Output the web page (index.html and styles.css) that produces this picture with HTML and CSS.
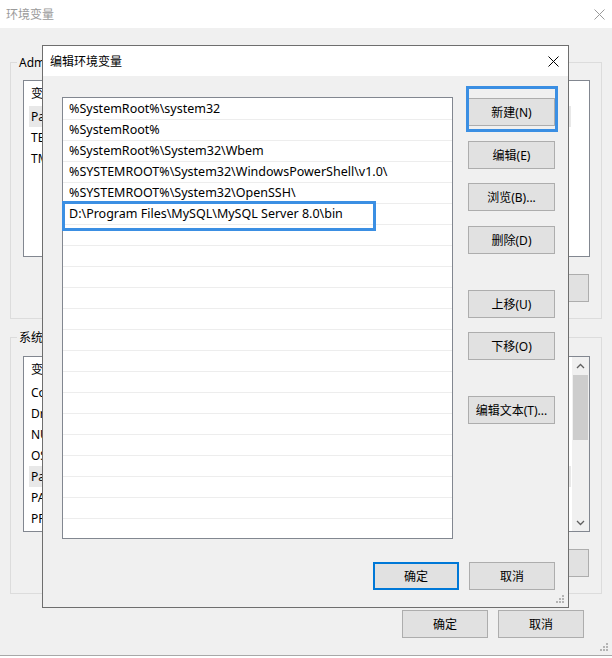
FILE: index.html
```html
<!DOCTYPE html>
<html lang="zh-CN">
<head>
<meta charset="utf-8">
<title>环境变量</title>
<link rel="stylesheet" href="styles.css">
</head>
<body>
<div class="win">
  <div class="titlebar">
    <span class="title">环境变量</span>
    <svg class="x-gray" width="11" height="11" viewBox="0 0 11 11"><path d="M0.5 0.5L10.5 10.5M10.5 0.5L0.5 10.5" stroke="#9a9a9a" stroke-width="1"/></svg>
  </div>
  <div class="body">
    <fieldset class="group g1">
      <legend>Administrator 的用户变量(U)</legend>
      <div class="list l1">
        <div class="row head"><span class="c1">变量</span></div>
        <div class="row sel"><span class="c1">Path</span></div>
        <div class="row"><span class="c1">TEMP</span></div>
        <div class="row"><span class="c1">TMP</span></div>
      </div>
      <div class="btnrow">
        <button class="btn">新建(N)...</button>
        <button class="btn">编辑(E)...</button>
        <button class="btn">删除(D)</button>
      </div>
    </fieldset>
    <fieldset class="group g2">
      <legend>系统变量(S)</legend>
      <div class="list l2">
        <div class="rows">
          <div class="row head"><span class="c1">变量</span></div>
          <div class="row"><span class="c1">ComSpec</span></div>
          <div class="row"><span class="c1">DriverData</span></div>
          <div class="row"><span class="c1">NUMBER_OF_PROCESSORS</span></div>
          <div class="row"><span class="c1">OS</span></div>
          <div class="row sel"><span class="c1">Path</span></div>
          <div class="row"><span class="c1">PATHEXT</span></div>
          <div class="row"><span class="c1">PROCESSOR_ARCHITECTURE</span></div>
        </div>
        <div class="sb">
          <div class="sb-arrow"><svg width="9" height="6" viewBox="0 0 9 6"><path d="M1 5L4.5 1.5L8 5" fill="none" stroke="#606060" stroke-width="1.3"/></svg></div>
          <div class="sb-track"><div class="sb-thumb"></div></div>
          <div class="sb-arrow"><svg width="9" height="6" viewBox="0 0 9 6"><path d="M1 1L4.5 4.5L8 1" fill="none" stroke="#606060" stroke-width="1.3"/></svg></div>
        </div>
      </div>
      <div class="btnrow">
        <button class="btn">新建(W)...</button>
        <button class="btn">编辑(I)...</button>
        <button class="btn">删除(L)</button>
      </div>
    </fieldset>
    <div class="footer">
      <button class="btn">确定</button>
      <button class="btn">取消</button>
    </div>
  </div>
  <svg class="grip grip-outer" width="8" height="8" viewBox="0 0 8 8"><g fill="#b4b4b4"><rect x="6" y="0" width="2" height="2"/><rect x="3" y="3" width="2" height="2"/><rect x="6" y="3" width="2" height="2"/><rect x="0" y="6" width="2" height="2"/><rect x="3" y="6" width="2" height="2"/><rect x="6" y="6" width="2" height="2"/></g></svg>
</div>

<div class="dlg">
  <div class="dlg-title">
    <span>编辑环境变量</span>
    <svg width="11" height="11" viewBox="0 0 11 11"><path d="M0.5 0.5L10.5 10.5M10.5 0.5L0.5 10.5" stroke="#000" stroke-width="1"/></svg>
  </div>
  <div class="dlg-main">
    <div class="plist">
      <div class="prow">%SystemRoot%\system32</div>
      <div class="prow">%SystemRoot%</div>
      <div class="prow">%SystemRoot%\System32\Wbem</div>
      <div class="prow">%SYSTEMROOT%\System32\WindowsPowerShell\v1.0\</div>
      <div class="prow">%SYSTEMROOT%\System32\OpenSSH\</div>
      <div class="prow">D:\Program Files\MySQL\MySQL Server 8.0\bin</div>
      <div class="prow"></div><div class="prow"></div><div class="prow"></div><div class="prow"></div>
      <div class="prow"></div><div class="prow"></div><div class="prow"></div><div class="prow"></div>
      <div class="prow"></div><div class="prow"></div><div class="prow"></div><div class="prow"></div>
      <div class="prow"></div><div class="prow"></div>
    </div>
    <div class="pbtns">
      <button class="btn">新建(N)</button>
      <button class="btn">编辑(E)</button>
      <button class="btn">浏览(B)...</button>
      <button class="btn">删除(D)</button>
      <button class="btn sp">上移(U)</button>
      <button class="btn">下移(O)</button>
      <button class="btn sp">编辑文本(T)...</button>
    </div>
  </div>
  <div class="dlg-footer">
    <button class="btn default">确定</button>
    <button class="btn">取消</button>
  </div>
  <svg class="grip grip-dlg" width="8" height="8" viewBox="0 0 8 8"><g fill="#b4b4b4"><rect x="6" y="0" width="2" height="2"/><rect x="3" y="3" width="2" height="2"/><rect x="6" y="3" width="2" height="2"/><rect x="0" y="6" width="2" height="2"/><rect x="3" y="6" width="2" height="2"/><rect x="6" y="6" width="2" height="2"/></g></svg>
  <div class="mark mark-new"></div>
  <div class="mark mark-row"></div>
</div>
</body>
</html>
```

FILE: styles.css
```css
* { box-sizing: border-box; }

body {
  margin: 0;
  width: 612px;
  height: 658px;
  overflow: hidden;
  position: relative;
  background: #ffffff;
  font-family: "Noto Sans", "Noto Sans CJK SC", sans-serif;
  font-size: 12px;
  color: #000;
}

.win {
  width: 612px;
  height: 656px;
  background: #f0f0f0;
  border-bottom: 1px solid #a8a8a8;
  display: flex;
  flex-direction: column;
  position: relative;
}

.titlebar {
  height: 28px;
  flex: none;
  background: #fff;
  display: flex;
  align-items: center;
  justify-content: space-between;
  padding: 0 7px 0 6px;
}

.title { color: #9a9a9a; font-size: 12px; }

.body {
  padding: 26px 10px 0;
  display: flex;
  flex-direction: column;
}

fieldset.group {
  margin: 0;
  width: 592px;
  border: 1px solid #dcdcdc;
  padding: 0 11px 16px 12px;
  min-width: 0;
}

fieldset.group legend {
  margin-left: -6px;
  padding: 0 2px;
  line-height: 17px;
}

fieldset.group.g2 { margin-top: 10px; }

.list {
  background: #fff;
  border: 1px solid #828790;
  overflow: hidden;
}

.l1 { margin-top: 9px; height: 177px; }
.l2 { margin-top: 10px; height: 176px; display: flex; }
.l2 .rows { flex: 1; min-width: 0; overflow: hidden; }

.row {
  height: 21px;
  line-height: 21px;
  margin-left: 5px;
  padding-left: 2px;
  white-space: nowrap;
  display: flex;
}

.l1 .row { margin-right: 18px; }
.l2 .row { margin-right: 1px; }

.row.head { height: 25px; line-height: 25px; }
.row.sel { background: #e8e8e8; }
.row .c1 { width: 200px; flex: none; }

.sb {
  width: 17px;
  flex: none;
  background: #f0f0f0;
  display: flex;
  flex-direction: column;
}

.sb-arrow {
  height: 17px;
  display: flex;
  align-items: center;
  justify-content: center;
}

.sb-track { flex: 1; padding: 1px 1px 0; }
.sb-thumb { height: 65px; background: #cdcdcd; }

.btnrow {
  display: flex;
  justify-content: flex-end;
  gap: 10px;
  margin-top: 17px;
  padding-right: 1px;
}

.btn {
  width: 86px;
  height: 28px;
  padding: 0;
  margin: 0;
  background: #e1e1e1;
  border: 1px solid #adadad;
  font: inherit;
  color: #000;
  display: flex;
  align-items: center;
  justify-content: center;
}

.btn.default { border: 2px solid #0078d7; }

.footer {
  display: flex;
  justify-content: flex-end;
  gap: 10px;
  margin-top: 16px;
  padding-right: 18px;
}

.grip { position: absolute; }
.grip-outer { right: 4px; bottom: 4px; }
.grip-dlg { right: 4px; bottom: 4px; }

/* dialog */
.dlg {
  position: absolute;
  left: 42px;
  top: 45px;
  width: 527px;
  height: 563px;
  border: 1px solid #6e6e6e;
  background: #f0f0f0;
  display: flex;
  flex-direction: column;
}

.dlg-title {
  height: 30px;
  flex: none;
  background: #fff;
  display: flex;
  align-items: center;
  justify-content: space-between;
  padding: 0 9px 0 7px;
}

.dlg-main {
  display: flex;
  padding: 21px 0 0 19px;
}

.plist {
  width: 391px;
  height: 442px;
  border: 1px solid #828790;
  background: #fff;
  padding-top: 1px;
  overflow: hidden;
}

.prow {
  height: 21px;
  border-bottom: 1px solid #ededed;
  padding-left: 6px;
  line-height: 20px;
  font-size: 12.5px;
  white-space: nowrap;
}

.pbtns {
  margin-left: 15px;
  padding-top: 1px;
  display: flex;
  flex-direction: column;
  gap: 14.5px;
}

.pbtns .btn { width: 87px; }
.pbtns .btn.sp { margin-top: 21.5px; }

.dlg-footer {
  display: flex;
  justify-content: flex-end;
  gap: 10px;
  margin-top: 23px;
  padding-right: 13px;
}

.mark {
  position: absolute;
  border: 3px solid #3b8fe3;
}

.mark-new { left: 423px; top: 40px; width: 92px; height: 46px; }
.mark-row { left: 19px; top: 155px; width: 314px; height: 30px; }
```
